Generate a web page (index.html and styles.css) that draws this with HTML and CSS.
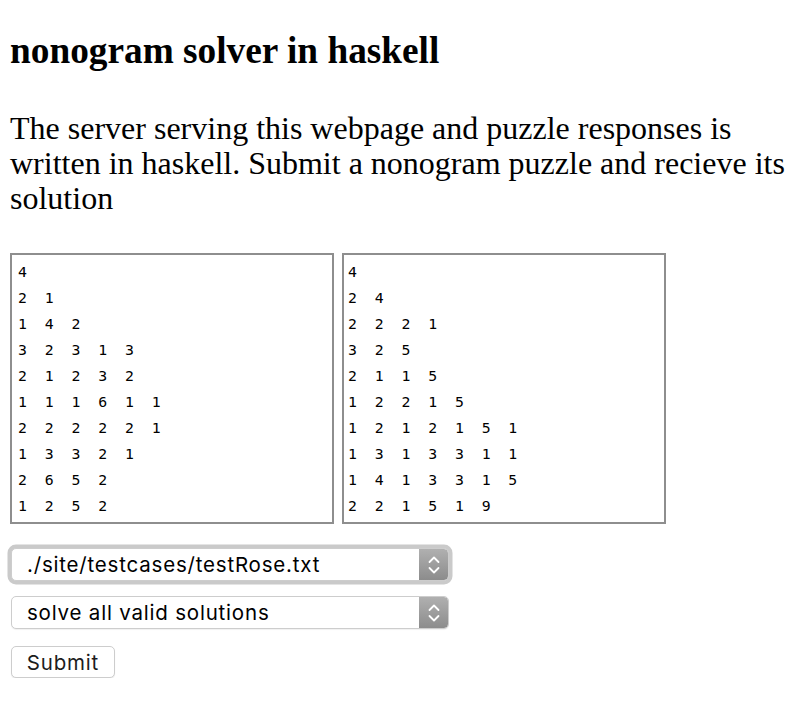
FILE: index.html
```html
<!DOCTYPE html>
<html>
<head>
<meta charset="utf-8">
<link rel="stylesheet" href="styles.css">
</head>
<body>
<h1 class="title">nonogram solver in haskell</h1>
<p class="intro">The server serving this webpage and puzzle responses is written in haskell. Submit a nonogram puzzle and recieve its solution</p>
<form class="form">
<div class="areas">
<textarea class="clues first">4
2  1
1  4  2
3  2  3  1  3
2  1  2  3  2
1  1  1  6  1  1
2  2  2  2  2  1
1  3  3  2  1
2  6  5  2
1  2  5  2</textarea>
<textarea class="clues">4
2  4
2  2  2  1
3  2  5
2  1  1  5
1  2  2  1  5
1  2  1  2  1  5  1
1  3  1  3  3  1  1
1  4  1  3  3  1  5
2  2  1  5  1  9</textarea>
</div>
<div class="select focused"><span class="select-text">./site/testcases/testRose.txt</span><span class="arrows"><svg width="14" height="22" viewBox="0 0 14 22"><path d="M2.5 8 L7 3.5 L11.5 8 M2.5 14 L7 18.5 L11.5 14" fill="none" stroke="#fff" stroke-width="1.8" stroke-linecap="round" stroke-linejoin="round"/></svg></span></div>
<div class="select"><span class="select-text">solve all valid solutions</span><span class="arrows"><svg width="14" height="22" viewBox="0 0 14 22"><path d="M2.5 8 L7 3.5 L11.5 8 M2.5 14 L7 18.5 L11.5 14" fill="none" stroke="#fff" stroke-width="1.8" stroke-linecap="round" stroke-linejoin="round"/></svg></span></div>
<button type="button" class="submit">Submit</button>
</form>
</body>
</html>
```
FILE: styles.css
```css
html, body { background: #fff; }
body {
  margin: 0;
  padding: 0 10px;
  font-family: "Liberation Serif", "Times New Roman", serif;
  color: #000;
}
.title {
  margin: 0;
  padding-top: 30px;
  font-size: 37.3px;
  line-height: 42px;
  font-weight: bold;
}
.intro {
  margin: 0;
  padding-top: 39px;
  font-size: 32px;
  line-height: 35px;
}
.form { margin-top: 37px; }
.areas { display: flex; gap: 8px; }
.clues {
  box-sizing: border-box;
  width: 324px;
  height: 271px;
  margin: 0;
  border: 2px solid #8e8e8e;
  border-radius: 0;
  padding: 4px 4px 6px;
  font-family: "DejaVu Sans Mono", "Liberation Mono", monospace;
  font-size: 14.8px;
  line-height: 26px;
  color: #000;
  background: #fff;
  resize: none;
  overflow: hidden;
  white-space: pre;
}
.clues.first { padding-left: 6px; }
.select {
  box-sizing: border-box;
  display: flex;
  align-items: stretch;
  width: 438px;
  height: 33px;
  margin-left: 1px;
  margin-top: 24px;
  border: 1px solid #cdcdcd;
  border-radius: 5px;
  font-family: Inter, "Liberation Sans", Arial, sans-serif;
  font-size: 20.5px;
  letter-spacing: 0.8px;
  color: #000;
  background: #fff;
  overflow: hidden;
  box-shadow: 0 1px 1px rgba(0,0,0,0.06);
}
.select + .select { margin-top: 15px; }
.select.focused {
  box-shadow: 0 0 0 3.5px #cacaca;
}
.select-text {
  flex: 1;
  display: flex;
  align-items: center;
  padding-left: 15px;
}
.arrows {
  display: flex;
  align-items: center;
  justify-content: center;
  width: 29px;
  border-radius: 0 4px 4px 0;
  background: linear-gradient(#b0b0b0, #8c8c8c);
}
.submit {
  display: block;
  box-sizing: border-box;
  margin: 17px 0 0 1px;
  width: 104px;
  height: 32px;
  padding: 0;
  border: 1px solid #cdcdcd;
  border-radius: 5px;
  background: #fff;
  box-shadow: 0 1px 1px rgba(0,0,0,0.08);
  font-family: Inter, "Liberation Sans", Arial, sans-serif;
  font-size: 20.5px;
  letter-spacing: 0.8px;
  color: #1c1c1c;
}
```
